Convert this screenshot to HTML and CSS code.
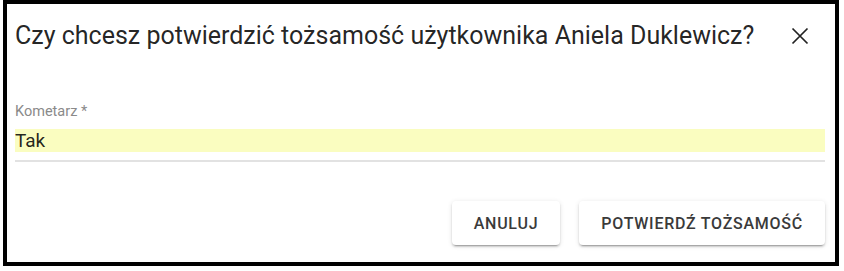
FILE: index.html
```html
<!DOCTYPE html>
<html lang="pl">
<head>
<meta charset="utf-8">
<link rel="stylesheet" href="styles.css">
</head>
<body>
<div class="frame">
  <div class="dialog">
    <div class="title-row">
      <h2 class="title">Czy chcesz potwierdzić tożsamość użytkownika Aniela Duklewicz?</h2>
      <button class="close" aria-label="Zamknij">
        <svg width="18" height="18" viewBox="0 0 18 18"><path d="M1.5 1.5L16.5 16.5M16.5 1.5L1.5 16.5" stroke="#222" stroke-width="1.7" fill="none"/></svg>
      </button>
    </div>
    <div class="field">
      <label class="label">Kometarz *</label>
      <div class="input">Tak</div>
      <div class="underline"></div>
    </div>
    <div class="actions">
      <button class="btn">ANULUJ</button>
      <button class="btn">POTWIERDŹ TOŻSAMOŚĆ</button>
    </div>
  </div>
</div>
</body>
</html>
```
FILE: styles.css
```css
html, body {
  margin: 0;
  padding: 0;
  background: #fff;
  font-family: Roboto, "Liberation Sans", sans-serif;
}
.frame {
  margin-left: 3px;
  width: 836px;
  height: 266px;
  box-sizing: border-box;
  border: 4px solid #000;
  background: #fff;
}
.dialog {
  display: flex;
  flex-direction: column;
  height: 100%;
  padding: 0 10px 0 8px;
  box-sizing: border-box;
}
.title-row {
  display: flex;
  align-items: center;
  justify-content: space-between;
  margin-top: 16px;
  height: 32px;
}
.title {
  margin: 0;
  font-size: 25px;
  font-weight: 400;
  line-height: 32px;
  color: rgba(0,0,0,0.87);
}
.close {
  border: 0;
  background: none;
  padding: 0;
  width: 18px;
  height: 18px;
  margin-right: 16px;
  display: flex;
}
.field {
  margin-top: 52px;
  display: flex;
  flex-direction: column;
}
.label {
  font-size: 14.5px;
  line-height: 16px;
  color: #8a8a8a;
}
.input {
  margin-top: 9px;
  height: 23px;
  line-height: 23px;
  background: #fafdc0;
  font-size: 19px;
  color: rgba(0,0,0,0.87);
}
.underline {
  margin-top: 8px;
  height: 2px;
  background: #e2e2e2;
}
.actions {
  margin-top: 39px;
  display: flex;
  justify-content: flex-end;
  gap: 19px;
}
.btn {
  height: 44px;
  padding: 0 22px;
  border: 0;
  border-radius: 4px;
  background: #fff;
  font-family: Roboto, "Liberation Sans", sans-serif;
  font-size: 16px;
  font-weight: 500;
  letter-spacing: 0.75px;
  color: #3a3a3a;
  box-shadow: 0 3px 1px -2px rgba(0,0,0,.2), 0 2px 2px 0 rgba(0,0,0,.14), 0 1px 5px 0 rgba(0,0,0,.12);
}
```
